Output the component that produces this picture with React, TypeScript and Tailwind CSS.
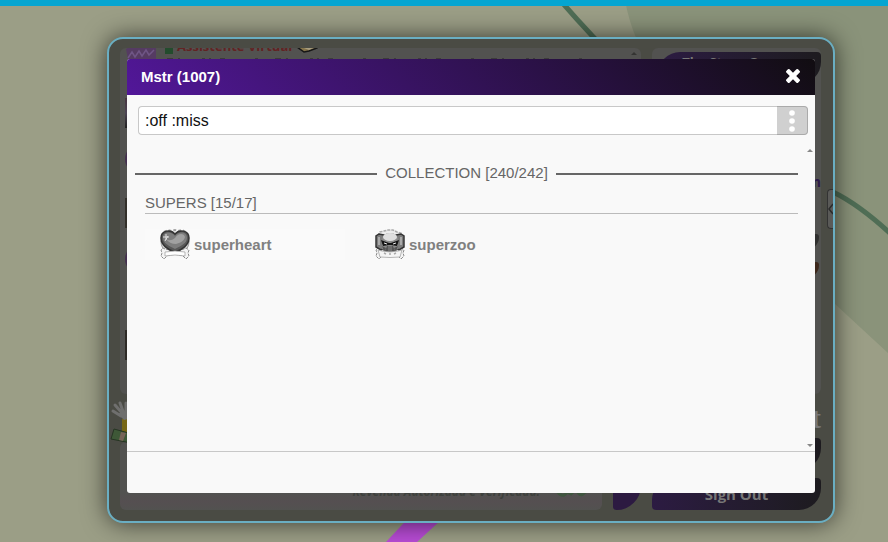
import { useState } from 'react'

const items = [
  { name: 'superheart', icon: HeartIcon, bg: 'bg-[#fafafa]' },
  { name: 'superzoo', icon: ZooIcon, bg: '' },
]

const avatars = [
  { top: 'mt-8', look: 'bg-linear-to-b from-[#473540] via-[#4d4555] to-[#222]' },
  { top: 'mt-4', look: 'rounded-full bg-[#44304f]' },
  { top: 'mt-6', look: 'bg-[#33302b]' },
  { top: 'mt-4', look: 'rounded-full bg-[#44304f]' },
  { top: 'mt-14', look: 'bg-[#2e2b27]' },
]

function Bones() {
  return (
    <>
      <path
        d="M5 20 3 19 1 21l1 3-1 3 3 3 3-3 8-1 8 1 3 3 3-3-1-3 1-3-3-2-2 1-9 2z"
        fill="#f4f4f4"
        stroke="#8b8b8b"
        strokeWidth="1"
        strokeDasharray="3 1"
      />
      <path d="M7 27q8-2 16 0l-1 2H8z" fill="#f9f9f9" />
    </>
  )
}

function HeartIcon() {
  return (
    <svg width="30" height="31" viewBox="0 0 30 31" aria-hidden="true">
      <path d="M4 3 8 1l4 1 3-1 3 1 4-1 4 2" fill="none" stroke="#a2a2a2" strokeWidth="2" strokeDasharray="3 2" />
      <path d="M1 12q0 7 5 10h18q5-3 5-10" fill="#dcdcdc" stroke="#999" strokeWidth="1" />
      <Bones />
      <path
        d="M15 23C8 21 1 16 1 9 1 1 11 0 15 5 19 0 29 1 29 9c0 7-7 12-14 14z"
        fill="#585858"
        stroke="#333"
        strokeWidth="1.5"
      />
      <path d="M15 20C9 17 3 14 3 9 3 2 12 2 15 7c3-5 12-5 12 2 0 5-6 8-12 11z" fill="#7d7d7d" />
      <path d="M15 9c3-5 9-5 10-1-1 4-5 6-9 7-4 0-8-2-10-5q4 3 9-1z" fill="#a1a1a1" />
      <path d="M3 8h6M6 5v6M5 12l3-5" stroke="#e0e0e0" strokeWidth="1" />
      <path d="M5 23q10-2 20 0v4q-10-2-20 0z" fill="#fff" stroke="#999" strokeWidth="0.7" />
    </svg>
  )
}

function ZooIcon() {
  return (
    <svg width="30" height="31" viewBox="0 0 30 31" aria-hidden="true">
      <path d="M3 7 5 3l4-1 4-1h5l4 2 4 1 1 4z" fill="#ececec" stroke="#aaa" strokeWidth="1.5" strokeDasharray="3 1" />
      <Bones />
      <path d="M9 6 4 5 1 7v11l5 3 4-2zM21 6l5-1 3 2v11l-5 3-4-2z" fill="#7c7c7c" stroke="#333" strokeWidth="1.5" />
      <path d="M3 8h2v8H3zM25 8h2v8h-2z" fill="#aaa" />
      <path d="M7 12q0-8 8-8t8 8v8l-4 3h-8l-4-3z" fill="#8b8b8b" />
      <ellipse cx="15" cy="8" rx="7" ry="4" fill="#dedede" />
      <path d="M6 11l8 3h2l8-3-2 6-6-1h-2l-6 1z" fill="#151515" />
      <path d="m9 14 3 1M21 14l-3 1" stroke="#eee" strokeWidth="1" />
      <path d="M12 17h6l2 5H10zM7 17l4 2-2 4zM23 17l-4 2 2 4z" fill="#555" />
      <path d="M14 16v6M16 16v6" stroke="#898989" strokeWidth="1" />
      <path d="m3 21 4 1q8 2 16 0l4-1-2 7q-10 1-20 0z" fill="#f5f5f5" stroke="#9b9b9b" strokeWidth="0.7" />
      <path d="m9 24 2 1M14 25h2M19 25l2-1" stroke="#aaa" strokeWidth="1.5" />
    </svg>
  )
}

function Backdrop() {
  return (
    <svg
      className="absolute inset-0 h-full w-full"
      viewBox="0 0 888 542"
      preserveAspectRatio="none"
      aria-hidden="true"
    >
      <path d="M625 0q4 22 12 40 100 190 198 264l53 49V0z" fill="#8a937a" />
      <path d="M560 0q32 37 62 66 100 80 211 126 27 13 60 44" fill="none" stroke="#4f6d55" strokeWidth="5" />
      <path d="M416 510h36l-35 32h-31z" fill="#b84cd5" />
    </svg>
  )
}

function ChatRoom() {
  return (
    <div className="flex h-full gap-[11px] pt-[9px] pr-3 pb-[11px] pl-[11px] font-['Open_Sans','Noto_Sans',sans-serif]" aria-hidden="true">
      <div className="flex min-w-0 flex-1 flex-col gap-12">
        <div className="relative min-h-0 flex-1 overflow-hidden rounded-md bg-[#525250] pl-[5px]">
          <div className="-mt-3 flex gap-2">
            <svg width="32" height="30" viewBox="0 0 32 30">
              <path d="M1 13l4-2 4 1 4-2 5 2 5-2 8 2v11l-10 3-8-1-9 3z" fill="#553b62" />
              <path d="m3 22 4-6 3 5 4-6 3 5 4-6 3 5 5-5" fill="none" stroke="#6f5585" strokeWidth="1.5" />
            </svg>
            <div className="min-w-0 flex-1 text-[13px] leading-4 font-bold">
              <p className="flex h-[18px] items-end gap-1 text-[#622323]">
                <i className="h-2 w-2 bg-[#234c2d]" />
                Assistente Virtual
                <svg width="22" height="12" viewBox="0 0 22 12">
                  <path d="M1 5l7 5 5-1 8-3V3l-7 3-7-4-6 2z" fill="#85744b" stroke="#161616" strokeWidth="1.5" />
                  <path d="m8 5 5 2 6-3" fill="none" stroke="#a99e80" strokeWidth="2" />
                </svg>
              </p>
              <svg className="mt-1" width="430" height="2">
                <path d="M2 1h428" stroke="#262624" strokeWidth="1" strokeDasharray="6 5 2 22 3 4 2 9 5 30 3 17" />
              </svg>
            </div>
          </div>
          {avatars.map((avatar, i) => (
            <div key={i} className={`h-[30px] w-[30px] ${avatar.top} ${avatar.look}`} />
          ))}
          <i className="absolute top-1 right-1 border-x-3 border-b-3 border-x-transparent border-b-[#343432]" />
        </div>
        <div className="flex h-[68px] items-end gap-[11px]">
          <div className="flex h-full min-w-0 flex-1 items-end justify-end gap-4 rounded-md bg-linear-to-b from-[#525250] from-75% via-[#554f51] via-88% to-[#525250] px-1 pb-2.5">
            <span className="text-xs leading-4 font-bold text-[#3e413d] italic">Revenda Autorizada e Verificada!</span>
            <svg width="42" height="14" viewBox="0 0 42 14">
              <path d="M1 5q6 8 10 1l4 2 5-5q4 9 8 4l4-3 8 1" fill="none" stroke="#3f563f" strokeWidth="3" />
            </svg>
          </div>
          <div className="h-12 w-[28px] rounded-[4px_4px_28px_4px] bg-[#2c1a41]" />
        </div>
      </div>
      <div className="flex w-[169px] flex-col">
        <div className="h-[346px] rounded-md bg-[#525250] pt-1 pl-1.5">
          <div className="h-8 rounded-[22px_4px_22px_4px] bg-linear-to-r from-[#2c1b42] to-[#1d1b1f] pr-1 text-center text-[13px] leading-5 font-bold text-[#777]">
            The Stage Games
          </div>
          <div className="mt-[88px] text-right text-sm leading-5 font-bold text-[#2d1b49]">m</div>
          <div className="mt-[42px] flex flex-col items-end gap-3 pr-0.5">
            <div className="h-4 w-20 rounded-[4px_4px_18px_4px] bg-[#30302f]" />
            <div className="h-4 w-20 rounded-[4px_4px_18px_4px] bg-[#3d281b]" />
          </div>
        </div>
        <div className="h-11 text-right font-['Liberation_Serif',serif] text-[30px] leading-12 font-bold text-[#777]">t</div>
        <div className="h-8 rounded-[18px_4px_22px_4px] bg-linear-to-r from-[#2c1b42] to-[#1d1b1f]" />
        <div className="mt-auto h-8 rounded-[22px_4px_22px_4px] bg-linear-to-r from-[#2c1b42] to-[#1d1b1f] text-center text-[15px] leading-8 font-bold text-[#777]">
          Sign Out
        </div>
      </div>
    </div>
  )
}

export default function App() {
  const [query, setQuery] = useState(':off :miss')
  const [open, setOpen] = useState(true)

  return (
    <div className="relative flex min-h-screen flex-col overflow-hidden bg-[#9b9e86] font-['Liberation_Sans',Arial,sans-serif]">
      <Backdrop />
      <div className="relative h-1.5 bg-[#05a5d1]" />
      <div className="relative flex flex-1 flex-col pt-[31px] pr-[53px] pb-[19px] pl-[107px]">
        <main className="relative h-[486px] flex-auto rounded-2xl border-2 border-[#6aaec2] bg-[#4a4b44] shadow-[0_0_24px_rgba(0,0,0,0.65)]">
          <ChatRoom />
          <svg className="absolute top-[360px] left-0" width="28" height="46" viewBox="0 0 28 46" aria-hidden="true">
            <path d="M13 20h15v20H13z" fill="#776716" />
            <path
              d="m4 12 8 5M6 6l8 9M11 4l4 11M17 4v12M22 3l-3 13"
              stroke="#6f6f6e"
              strokeWidth="3"
              strokeLinecap="round"
            />
            <path d="m9 15 5-3 9 1v6l-8 2z" fill="#6f6f6e" />
            <path d="m5 30 22 6v9L2 40z" fill="#3e5837" stroke="#263523" />
            <path d="m12 33 5 1-3 8-4-1z" fill="#776458" />
          </svg>
          <div className="absolute top-[150px] right-0 flex h-10 w-1.5 items-center rounded-l border border-r-0 border-[#333] bg-[#5a5a58]" aria-hidden="true">
            <svg width="5" height="12" viewBox="0 0 5 12">
              <path d="M5 1 1 6l4 5" fill="none" stroke="#2b2b2b" strokeWidth="1.5" />
            </svg>
          </div>

          {open && (
            <section
              role="dialog"
              aria-labelledby="dialog-title"
              className="absolute top-5 right-[18px] bottom-7 left-[18px] flex flex-col overflow-hidden rounded-[3px] bg-[#f9f9f9]"
            >
              <header className="flex h-9 items-center justify-between bg-[linear-gradient(45deg,#521799,#110d11)] pr-[15px] pl-3.5 text-white">
                <h1 id="dialog-title" className="text-[15px] leading-5 font-bold">Mstr (1007)</h1>
                <button type="button" aria-label="Close" className="pb-0.5" onClick={() => setOpen(false)}>
                  <svg width="14" height="14" viewBox="110 366 1188 1188" fill="currentColor" aria-hidden="true">
                    <path d="M1298 1322q0 40-28 68l-136 136q-28 28-68 28t-68-28l-294-294-294 294q-28 28-68 28t-68-28l-136-136q-28-28-28-68t28-68l294-294-294-294q-28-28-28-68t28-68l136-136q28-28 68-28t68 28l294 294 294-294q28-28 68-28t68 28l136 136q28 28 28 68t-28 68l-294 294 294 294q28 28 28 68z" />
                  </svg>
                </button>
              </header>

              <div className="flex h-10 shrink-0 pt-[11px] pr-[7px] pl-[11px]">
                <input
                  type="text"
                  aria-label="Search"
                  value={query}
                  onChange={e => setQuery(e.target.value)}
                  className="min-w-0 flex-1 rounded-l border border-r-0 border-[#c8c8c8] bg-white px-1.5 text-base text-[#111] outline-none"
                />
                <button
                  type="button"
                  aria-label="Options"
                  className="flex w-[31px] items-center justify-center rounded-r border border-l-0 border-[#aaa] bg-[#d0d0d0]"
                >
                  <svg width="6" height="22" viewBox="0 0 6 22" fill="#fff" aria-hidden="true">
                    <circle cx="3" cy="3" r="2.8" />
                    <circle cx="3" cy="11" r="2.8" />
                    <circle cx="3" cy="19" r="2.8" />
                  </svg>
                </button>
              </div>

              <div className="flex min-h-0 flex-1 pl-2 text-[15px]">
                <div className="flex-1 pt-7 text-[#666]">
                  <h2 className="flex items-center gap-2 leading-5">
                    <span className="mt-0.5 h-0.5 flex-1 bg-[#666]" />
                    COLLECTION [240/242]
                    <span className="mt-0.5 h-0.5 flex-1 bg-[#666]" />
                  </h2>
                  <h3 className="mt-2.5 ml-2.5 h-[21px] border-b border-[#bbb] leading-5">SUPERS [15/17]</h3>
                  <ul className="mt-[15px] ml-2.5 flex flex-wrap gap-[15px]">
                    {items.map(item => (
                      <li
                        key={item.name}
                        className={`flex w-[200px] items-center gap-1 pl-[15px] leading-5 font-bold text-[#808080] ${item.bg}`}
                      >
                        <item.icon />
                        {item.name}
                      </li>
                    ))}
                  </ul>
                </div>
                <div className="flex w-[17px] flex-col items-end justify-between pt-3.5 pr-0.5 pb-1" aria-hidden="true">
                  <svg width="6" height="3" viewBox="0 0 6 3"><path d="M0 3 3 0l3 3z" fill="#888" /></svg>
                  <svg width="6" height="3" viewBox="0 0 6 3"><path d="M0 0h6L3 3z" fill="#888" /></svg>
                </div>
              </div>

              <footer className="h-[42px] shrink-0 border-t border-[#c8c8c8]" />
            </section>
          )}
        </main>
      </div>
    </div>
  )
}
